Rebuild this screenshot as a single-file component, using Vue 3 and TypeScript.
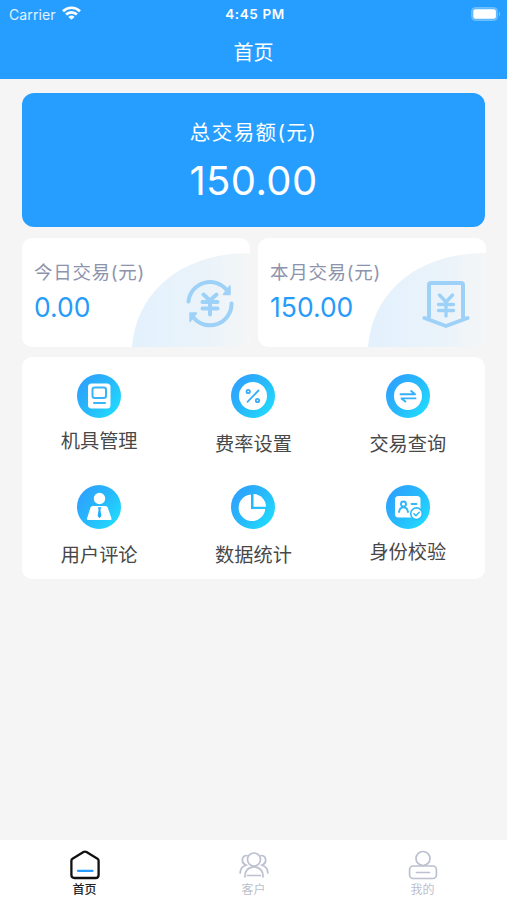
<script setup lang="ts">
interface MenuItem {
  label: string
  icon: 'device' | 'rate' | 'query' | 'review' | 'stats' | 'verify'
  gap: 'tight' | 'mid' | 'wide'
}

const menu: MenuItem[] = [
  { label: '机具管理', icon: 'device', gap: 'tight' },
  { label: '费率设置', icon: 'rate', gap: 'wide' },
  { label: '交易查询', icon: 'query', gap: 'wide' },
  { label: '用户评论', icon: 'review', gap: 'mid' },
  { label: '数据统计', icon: 'stats', gap: 'wide' },
  { label: '身份校验', icon: 'verify', gap: 'tight' },
]

const stats = [
  { label: '今日交易(元)', value: '0.00', icon: 'cycle' },
  { label: '本月交易(元)', value: '150.00', icon: 'bill' },
]

const tabs = [
  { label: '首页', icon: 'home', active: true },
  { label: '客户', icon: 'clients', active: false },
  { label: '我的', icon: 'mine', active: false },
]
</script>

<template>
  <div class="screen">
    <header class="header">
      <div class="status">
        <div class="carrier">
          <span>Carrier</span>
          <svg class="wifi" width="19" height="14" viewBox="0 0 19 14" fill="none" stroke="#fff" stroke-width="2.7">
            <path d="M1 5.2a12.2 12.2 0 0 1 17 0" />
            <path d="M4.1 8.5a7.8 7.8 0 0 1 10.8 0" />
            <path d="M9.5 13.8 6.4 10.9a4.3 4.3 0 0 1 6.200 0Z" fill="#fff" stroke="none" />
          </svg>
        </div>
        <span class="time">4:45 PM</span>
        <svg class="battery" width="30" height="14" viewBox="0 0 30 14">
          <rect x=".5" y=".5" width="26" height="13" rx="4" fill="#5db8ff" stroke="#6fbfff" />
          <rect x="2.3" y="2.3" width="22.6" height="9.4" rx="2.3" fill="#fff" />
          <path d="M28 4.5q2 2.5 0 5Z" fill="#8dceff" />
        </svg>
      </div>
      <h1 class="title">首页</h1>
    </header>

    <main class="content">
      <section class="total">
        <div class="total-label">总交易额(元)</div>
        <div class="total-value">150.00</div>
      </section>

      <section class="stats">
        <article v-for="s in stats" :key="s.label" class="stat">
          <svg class="stat-art" width="118" height="94" viewBox="0 0 118 94">
            <defs>
              <linearGradient :id="'art-' + s.icon" x1="0" y1="0" x2="1" y2="0">
                <stop offset="0" stop-color="#e3f1fd" />
                <stop offset=".6" stop-color="#eaf3fa" />
                <stop offset="1" stop-color="#f4f6f7" />
              </linearGradient>
            </defs>
            <path d="M0 94C4 40 48 0 118 0V94Z" :fill="`url(#art-${s.icon})`" />
          </svg>
          <svg class="stat-icon" width="48" height="48" viewBox="0 0 48 48" fill="none" stroke="#9ed1f7" stroke-width="4" stroke-linecap="round" stroke-linejoin="round">
            <g v-if="s.icon === 'cycle'">
              <path d="M2.500 21.500A21.500 21.500 0 0 1 41 10.500" />
              <path d="M45.500 23.500A21.500 21.500 0 0 1 7 37" />
              <path d="M44 6v8.500H37.500ZM4 41.500v-8.500H10.500Z" fill="#9ed1f7" stroke-width="1.500" />
              <path d="M17.500 14.500 24 20.500l6.500-6M16.500 22h15M16.500 28.500h15M24 21v13.500" />
            </g>
            <g v-else>
              <path d="M7 37V5q0-2 2-2h30q2 0 2 2v32" />
              <path d="M2.500 38 24 46l21.500-8" />
              <path d="M17.500 15l6.500 7 6.500-7M16.500 24.500h15M16.500 30.500h15M24 23v13" stroke-width="3.400" />
            </g>
          </svg>
          <div class="stat-label">{{ s.label }}</div>
          <div class="stat-value">{{ s.value }}</div>
        </article>
      </section>

      <section class="menu">
        <div v-for="m in menu" :key="m.label" class="menu-item" :class="m.gap">
          <svg class="menu-icon" width="44" height="44" viewBox="0 0 44 44" fill="none" stroke-linecap="round" stroke-linejoin="round">
            <defs>
              <linearGradient :id="'disc-' + m.icon" x1="0" y1=".1" x2="1" y2=".9">
                <stop offset="0" stop-color="#2f9dff" />
                <stop offset=".5" stop-color="#27b9fb" />
                <stop offset="1" stop-color="#1fe0ff" />
              </linearGradient>
            </defs>
            <circle cx="22" cy="22" r="22" :fill="`url(#disc-${m.icon})`" />
            <g v-if="m.icon === 'device'">
              <rect x="11" y="9.500" width="22.500" height="25" rx="3.500" fill="#fff" />
              <rect x="15.500" y="13.500" width="13.500" height="10.500" rx="2.200" stroke="#38b4f9" stroke-width="2" />
              <path d="M17 29h11" stroke="#38b4f9" stroke-width="2" />
            </g>
            <g v-else-if="m.icon === 'rate'">
              <circle cx="22" cy="22" r="14" fill="#fff" />
              <g stroke="#38aef8" stroke-width="1.800">
                <path d="M16.500 27.800 27.500 16.500" />
                <circle cx="17.200" cy="17.500" r="1.700" />
                <circle cx="26.500" cy="26.500" r="1.700" />
              </g>
            </g>
            <g v-else-if="m.icon === 'query'">
              <circle cx="22" cy="22" r="14" fill="#fff" />
              <path d="M14.500 20.200h14.500l-3.800-3.200M29.500 24.400H15.500l3.800 3.200" stroke="#35aff8" stroke-width="1.900" />
            </g>
            <g v-else-if="m.icon === 'review'">
              <circle cx="22.500" cy="13.500" r="5.700" fill="#fff" />
              <path d="M15.500 21h13.200q1.500 0 2 1.500l3.800 11q.4 1.500-1.200 1.500H11.200q-1.600 0-1.200-1.500l3.500-11q.5-1.500 2-1.500Z" fill="#fff" />
              <path d="M21 22.200h3.200l-.8 2.700 1 6-1.900 2.300-1.900-2.300 1-6Z" fill="#21aefa" />
            </g>
            <g v-else-if="m.icon === 'stats'">
              <path d="M20 9.500A13.300 13.300 0 1 0 34.200 24H20Z" fill="#fff" />
              <path d="M22.500 9A13 13 0 0 1 35 21.700H22.500Z" fill="#fff" />
            </g>
            <g v-else>
              <rect x="9" y="11" width="25.500" height="21.500" rx="3.500" fill="#fff" />
              <g stroke="#31b7fa" stroke-width="1.900">
                <circle cx="17.500" cy="19" r="2.500" />
                <path d="M13 27q.8-4.700 4.500-4.700T22 27M25.500 19h5" />
              </g>
              <circle cx="30.500" cy="28.700" r="5.800" fill="#fff" stroke="#28bdf9" stroke-width="1.600" />
              <path d="m27.900 28.700 2 2 3.300-3.500" stroke="#28bdf9" stroke-width="1.500" />
            </g>
          </svg>
          <span class="menu-label">{{ m.label }}</span>
        </div>
      </section>
    </main>

    <nav class="tabs">
      <div v-for="t in tabs" :key="t.label" class="tab" :class="{ active: t.active }">
        <svg width="32" height="32" viewBox="0 0 32 32" fill="none" stroke="#bcc0d0" stroke-width="1.700" stroke-linecap="round" stroke-linejoin="round">
          <g v-if="t.icon === 'home'">
            <path d="M16 2.600q.7 0 1.500.5l11 6.700q1.100.7 1.100 2V26q0 3-3 3H5.400q-3 0-3-3V11.800q0-1.300 1.100-2L14.500 3.100q.8-.5 1.500-.5Z" stroke="#111" stroke-width="2.300" />
            <path d="M9 21.800h14.500" stroke="#279dff" stroke-width="2.300" />
          </g>
          <g v-else-if="t.icon === 'clients'">
            <circle cx="16" cy="10.500" r="6.500" />
            <path d="M9 6.500C3.500 6.500 3 13.500 7 15.500M23 6.500c5.500 0 6 7 2 9M7 28C6.500 22 10.500 17.800 16 17.800S25.500 22 25 28M9.500 26.500h13M2.200 24q0-6.500 6.500-8M29.800 24q0-6.500-6.500-8" />
          </g>
          <g v-else>
            <circle cx="16" cy="9.500" r="7" />
            <rect x="2.600" y="17" width="26.800" height="12.500" rx="3.500" />
            <path d="M9.500 23.500h13" />
          </g>
        </svg>
        <span>{{ t.label }}</span>
      </div>
    </nav>
  </div>
</template>

<style>
body {
  margin: 0;
  background: #f4f4f4;
}
</style>

<style scoped>
.screen {
  display: flex;
  flex-direction: column;
  width: 507px;
  height: 900px;
  overflow: hidden;
  background: #f5f5f5;
  font-family: Inter, "Noto Sans CJK SC", sans-serif;
}
.header {
  flex: none;
  height: 79px;
  background: #269eff;
  color: #fff;
}
.status {
  display: grid;
  grid-template-columns: 1fr auto 1fr;
  align-items: center;
  height: 27px;
  padding: 0 6px 0 9px;
  font-size: 14px;
  line-height: 27px;
}
.carrier {
  display: flex;
  align-items: center;
  gap: 6px;
  letter-spacing: 0.1px;
  color: #e2f2ff;
}
.wifi {
  margin-top: -2px;
}
.time {
  font-weight: 600;
  font-size: 13.500px;
  letter-spacing: 0.600px;
  line-height: 28px;
}
.battery {
  justify-self: end;
  margin-top: -1px;
}
.title {
  margin: 0;
  font-size: 20px;
  line-height: 52px;
  font-weight: 400;
  text-align: center;
}
.content {
  flex: 1;
  padding: 14px 22px 0;
}
.total {
  box-sizing: border-box;
  height: 134px;
  padding-top: 25px;
  border-radius: 12px;
  background: #269eff;
  color: #fff;
  text-align: center;
}
.total-label {
  font-size: 20.500px;
  line-height: 30px;
  font-weight: 400;
  letter-spacing: 1.400px;
}
.total-value {
  margin-top: 9px;
  font-size: 40px;
  line-height: 48px;
  font-weight: 400;
  letter-spacing: 0.400px;
}
.stats {
  display: flex;
  gap: 8px;
  width: 464px;
  margin-top: 11px;
}
.stat {
  position: relative;
  flex: 1;
  box-sizing: border-box;
  height: 109px;
  padding: 20px 0 0 12px;
  overflow: hidden;
  border-radius: 10px;
  background: #fff;
}
.stat-art {
  position: absolute;
  right: 0;
  bottom: 0;
}
.stat-icon {
  position: absolute;
  right: 16px;
  top: 42px;
}
.stat-label {
  position: relative;
  font-size: 18.500px;
  line-height: 28px;
  letter-spacing: 0.700px;
  color: #8d93ad;
}
.stat-value {
  margin-top: 4px;
  font-size: 26.500px;
  line-height: 34px;
  font-weight: 400;
  color: #279bf8;
}
.menu {
  display: grid;
  grid-template-columns: repeat(3, 1fr);
  grid-template-rows: 111.500px 1fr;
  box-sizing: border-box;
  height: 222px;
  margin-top: 10px;
  padding-top: 16.500px;
  border-radius: 10px;
  background: #fff;
}
.menu-item {
  display: flex;
  flex-direction: column;
  align-items: center;
}
.menu-icon {
  flex: none;
}
.menu-label {
  font-size: 19.200px;
  line-height: 28px;
  color: #484848;
}
.tight .menu-label {
  margin-top: 9px;
}
.mid .menu-label {
  margin-top: 12px;
}
.wide .menu-label {
  margin-top: 12px;
}
.tabs {
  flex: none;
  display: grid;
  grid-template-columns: repeat(3, 1fr);
  height: 60px;
  background: #fff;
}
.tab {
  display: flex;
  flex-direction: column;
  align-items: center;
  padding-top: 9px;
  font-size: 12px;
  line-height: 18px;
  color: #bcc0cc;
}
.tab.active {
  color: #222;
  font-weight: 500;
}
</style>
